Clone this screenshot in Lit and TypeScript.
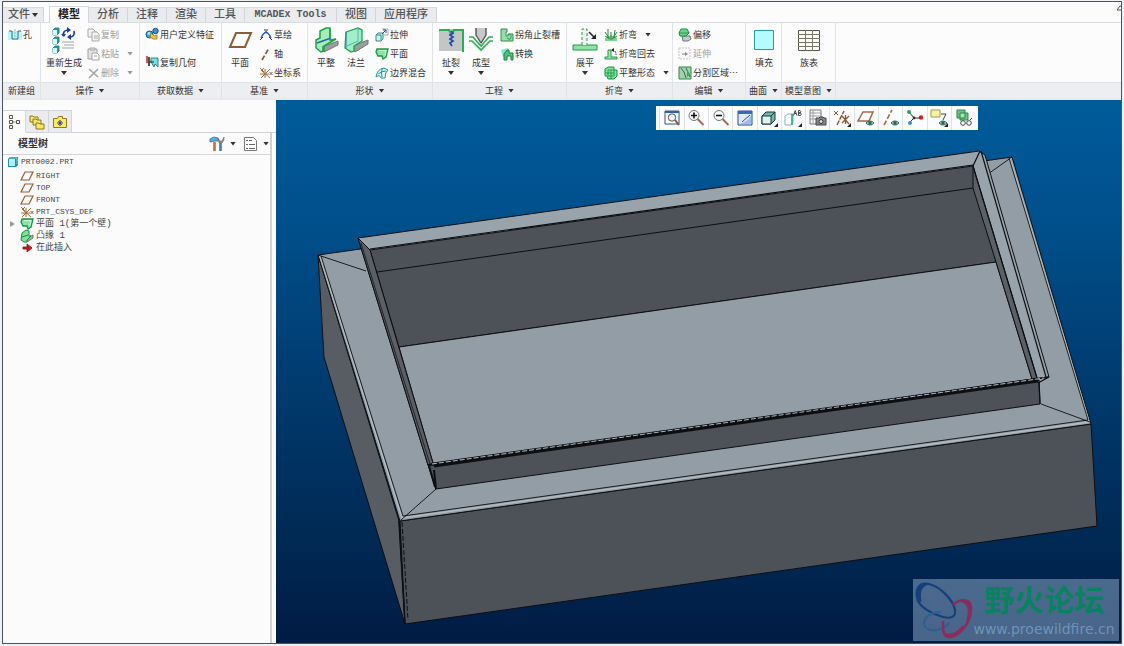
import { LitElement, html, css, svg, nothing, TemplateResult } from "lit";
import { customElement, property } from "lit/decorators.js";

const BR = "#8a5a34";

const csys = svg`<path d="M1 2l4 4M5 2 2 5M6 12V3M2 12l9-9M3 5l8 7M1 8h9" stroke="#a06a3c" fill="none"/><path d="M10.500 6l3 3m0-3-3 3" stroke="#555" fill="none" stroke-width=".9"/>`;
const sheet = svg`<path d="M2 2h11l-2 8-3 2-1-3H3L1 5Z" fill="#8ee2a2" stroke="#159447" stroke-width="1.300"/><path d="M4 3.500h7l-1 5" fill="none" stroke="#d5f7dc"/>`;
const eye = svg`<path d="M9 14q4-4 8 0-4 4-8 0Z" fill="#d8efe8" stroke="#2c5c50"/><circle cx="13" cy="14" r="1.800" fill="#1e6b55"/>`;
const corner = svg`<path d="M18 14v4h-4z" fill="#222"/>`;

const ICONS: Record<string, [number, number, TemplateResult<2>]> = {
  hole: [14, 14, svg`<path d="M0 3h14v9H0z" fill="#b9f5f8"/><path d="M1 3h3v8h6V3h3" fill="none" stroke="#2f6f78"/><path d="M7 1v11" stroke="#8fb9bd" stroke-dasharray="2 1"/>`],
  regen: [26, 28, svg`${[2, 11, 20].map((y) => svg`<path d="M2 ${y + 2}l2-2h4v5l-2 2H2z" fill="#2c9a9a" stroke="#24777a" stroke-width=".8"/><path d="M2 ${y + 2}h4v5H2z" fill="#d3faf8"/>`)}
    <path d="M11 16h12M13 19h10M11 22h12" stroke="#9da3a6"/><path d="M12.500 10q-1-5 4-6M23 5q1 5-3 6" fill="none" stroke="#1d3fae" stroke-width="1.700"/><path d="M16 1l4 3-4 3zM20 8l-4 3 4 3zM10 8h5l-2 3z" fill="#1d3fae"/>`],
  copy: [14, 14, svg`<g fill="#f3f3f3" stroke="#aaa"><path d="M2 1h5l2 2v6H2z"/><path d="M6 4h5l2 2v7H6z"/><path d="M8 8h4M8 10h4"/></g>`],
  paste: [14, 14, svg`<g fill="#e3e3e3" stroke="#a5a5a5"><path d="M2 2h9v10H2z"/><path d="M4 1h5v2H4z"/><path d="M6 6h5l2 2v5H6z" fill="#fafafa"/><path d="M8 9h3"/></g>`],
  del: [14, 14, svg`<path d="M3 3l9 8M12 3l-9 9" stroke="#a3a3a3" stroke-width="1.500"/>`],
  udf: [14, 14, svg`<circle cx="4.500" cy="7.500" r="3.500" fill="#36a8d2" stroke="#175c82"/><circle cx="10.500" cy="4" r="2.700" fill="#3f93d8" stroke="#174780"/><path d="M6 6l3 3 3-1v4H8L5 10z" fill="#efc84a" stroke="#8a7023" stroke-width=".8"/><circle cx="4" cy="6.500" r="1.400" fill="#aee8f5"/>`],
  geom: [14, 14, svg`<path d="M2 1v7" stroke="#c03028" stroke-width="1.600"/><path d="M4 2v9" stroke="#222" stroke-width="1.600"/><path d="M6 3h7v9l-3-3-1 3-3-5z" fill="#74e3df" stroke="#1c777a" stroke-width=".9"/><path d="M4 7h5" stroke="#222"/>`],
  plane: [26, 24, svg`<path d="M9 5h15l-6 14H3z" fill="#fff" stroke="#8f5c36" stroke-width="2"/>`],
  sketch: [14, 14, svg`<path d="M2 10q5-11 10 0" fill="none" stroke="#2456b8" stroke-width="1.300"/><path d="M1 12l3-3M10 9l3 3M5 2h4" stroke="#333"/><circle cx="7" cy="4" r="1" fill="#2456b8"/>`],
  axis: [14, 14, svg`<path d="M3 13L10 1" stroke=${BR} stroke-width="1.700" stroke-dasharray="5 2"/>`],
  csys: [14, 14, csys],
  flat: [26, 28, svg`<path d="M9 21l16-6v4l-14 7z" fill="#9a9d9e" stroke="#777"/><path d="M3 14l4-2V5l6-3h4v12l6-1-12 7v5l-3 1-5-4z" fill="#a5edb4" stroke="#1ca14c" stroke-width="1.500"/><path d="M4 17l14-5" stroke="#2764b5" stroke-width="1.500"/><path d="M17 3v10M10 26v-6" stroke="#1ca14c" stroke-width="1.500"/>`],
  flange: [26, 28, svg`<path d="M10 20l15-6v4l-13 8z" fill="#9a9d9e" stroke="#777"/><path d="M3 6l12-4 4 2v11l-8 5v5l-3 1-6-4z" fill="#a1efc6" stroke="#1ca14c" stroke-width="1.300"/><path d="M15 2v13M4 20l11-5" fill="none" stroke="#4eb0bd"/><path d="M3 6v16" stroke="#2d7eb5"/>`],
  extrude: [14, 14, svg`<path d="M1 7l2-2h5v6l-2 2H1z" fill="#c4f6f4" stroke="#3d8588"/><path d="M1 7h5v5" fill="none" stroke="#3d8588"/><path d="M7 1h6v6H8" fill="none" stroke="#aaa"/><path d="M7 6l4-4M8 2h3v3" fill="none" stroke="#214fa8"/>`],
  sheet: [14, 14, sheet],
  blend: [14, 14, svg`<path d="M1 11Q2 3 9 2l4 2q-3 2-3 8H6Q5 8 1 11z" fill="#dff8f8" stroke="#2491a6"/><path d="M3 8q4-3 8-3M7 3q-1 4 0 8" fill="none" stroke="#2491a6"/>`],
  rip: [26, 26, svg`<path d="M1 2h24v22H1z" fill="#c4c6c6"/><path d="M1 3h10l2 4M25 25V3H16l-2 4" fill="none" stroke="#27b052" stroke-width="2"/><path d="M13 4l2 2-3 2 3 2-3 2 3 2-3 2 2 3" fill="none" stroke="#2148ad" stroke-width="1.700"/>`],
  form: [26, 26, svg`<path d="M8 1h10v7l-5 9-5-9z" fill="#c7c9c9"/><path d="M8 1v7l5 8M18 1v7l-5 8" fill="none" stroke="#555" stroke-width="1.400"/><path d="M1 10h4l8 9 8-9h4M1 14h3l9 9 9-9h3" fill="none" stroke="#27b052" stroke-width="1.600"/>`],
  relief: [14, 14, svg`<path d="M1 1h6v3H6v4h2V6h5v7H1z" fill="#9fdaae" stroke="#279449"/><path d="M8 7q3-2 3 2t-4 1" fill="none" stroke="#279449"/>`],
  convert: [14, 14, svg`<path d="M1 3l7-2v7l-5 2z" fill="#7ce6e4"/><path d="M4 12V7l3-4h2v3h4v7h-2V9H7v4H4z" fill="#4cc477" stroke="#17853d"/>`],
  unbend: [26, 26, svg`<path d="M1 18h24v5H1z" fill="#8fe3a4" stroke="#27984a"/><path d="M10 18V2h5v16" fill="#eef3ef" stroke="#27984a" stroke-dasharray="3 2"/><path d="M17 5l6 6" stroke="#222" stroke-width="1.500"/><path d="M24 12h-5l5-5z" fill="#222"/>`],
  bend: [14, 14, svg`<path d="M1 10l6-3 6 3v3H1z" fill="#7fd493"/><path d="M7 12V4M5 10L1 4M9 10l4-6M4 9L4 1M10 9l1-7M1 8l5 3M13 8l-5 3" stroke="#2b8042" fill="none"/>`],
  back: [14, 14, svg`<path d="M1 12v-2h3V3h3v7h6v2z" fill="#9ce5ad" stroke="#299849"/><path d="M8 3q4 0 4 5" fill="none" stroke="#222" stroke-dasharray="2 1"/><path d="M7 3l3-2v4z" fill="#222"/>`],
  pattern: [14, 14, svg`<path d="M1 3l3-2h6v3h3v6l-3 3H4l-1-3H1z" fill="#7fdf97" stroke="#159447"/><path d="M4 4h6v6H4zM1 7h9M7 4v9" fill="none" stroke="#159447" stroke-width=".8"/>`],
  offset: [14, 14, svg`<path d="M4 8h8l1 3-3 2H5z" fill="#bcc" stroke="#777"/><path d="M3 1h6l2 4-3 3H2L1 5z" fill="#65d985" stroke="#168e40"/><path d="M1 5h10" fill="none" stroke="#168e40" stroke-width=".8"/>`],
  extend: [14, 14, svg`<path d="M1 1h11v11H1z" fill="#f7f7f7" stroke="#c5c5c5" stroke-dasharray="2 1"/><path d="M4 7h4" stroke="#888"/><path d="M7 5l3 2-3 2z" fill="#888"/>`],
  split: [14, 14, svg`<path d="M1 1h12v12H1z" fill="#a9cdb2" stroke="#2c8a49"/><path d="M3 2l3 4 2 6M8 2l4 9" fill="none" stroke="#277343"/><path d="M9 4v7l3-3z" fill="#2eae57"/>`],
  fill: [26, 26, svg`<path d="M3.500 3.500h19v19h-19z" fill="#b4fcfb" stroke="#2e989b"/>`],
  family: [26, 26, svg`<path d="M2.500 3.500h21v20h-21z" fill="#fdfdf8" stroke="#55554c"/><path d="M2 7.500h22M2 11.500h22M2 15.500h22M2 19.500h22M9.500 3v21M16.500 3v21" stroke="#77776a" fill="none"/>`],
  part: [12, 12, svg`<path d="M1 3l2-2h8v8l-2 2H1z" fill="#2b8f96"/><path d="M2 3h6v7H2z" fill="#a9f6f8"/><path d="M3 2h7v6" fill="none" stroke="#71d4d8"/>`],
  datum: [14, 12, svg`<path d="M5 2h8l-4 8H1z" fill="#fffdfa" stroke="#9b5c35" stroke-width="1.200"/>`],
  lip: [14, 14, svg`<path d="M6 9l7-3v3l-6 4z" fill="#aaa" stroke="#777"/><path d="M2 4l4-3 3 1v5l2 0-4 4v2H4L1 11z" fill="#7fe19a" stroke="#159447"/><path d="M2 8l6-2" stroke="#159447"/>`],
  insert: [12, 12, svg`<path d="M2 5h4V2l5 4-5 4V7H2z" fill="#d8131b" stroke="#711" stroke-width=".8"/>`],
  tree: [14, 18, svg`<g fill="#fff" stroke="#555"><path d="M2.500 2.500h3v3h-3zM2.500 7.500h3v3h-3zM2.500 12.500h3v3h-3zM9.500 7.500h3v3h-3z"/><path d="M5.500 9h4" stroke-dasharray="2 1"/></g>`],
  folders: [16, 16, svg`<g fill="#f7e56a" stroke="#8a7824"><path d="M1 2h3l1 1h4v5H1z"/><path d="M4 5h3l1 1h4v5H4z"/><path d="M7 9h3l1 1h4v5H7z"/></g>`],
  fav: [16, 16, svg`<path d="M1.500 4.500h4l1-2h4v2h4v9h-13z" fill="#f9ec62" stroke="#8a7824"/><path d="M8 6v6M5 9h6" stroke="#3038a0" stroke-width="1.200"/><path d="M6 7l4 4M10 7l-4 4" stroke="#3038a0" stroke-width=".7"/>`],
  tools: [16, 16, svg`<path d="M1 3l4-2 4 1v3H6L1 6z" fill="#58b3dc" stroke="#36738f" stroke-width=".8"/><path d="M5.500 6v9" stroke="#cd6c34" stroke-width="2.600"/><path d="M11.500 6v9" stroke="#3d7bb8" stroke-width="2.600"/><path d="M9 2l2 3h2l2-4v3l-2 3h-3z" fill="#8e9499" stroke="#666" stroke-width=".6"/>`],
  list: [16, 16, svg`<path d="M2.500 1.500h9l3 3v10h-12z" fill="#fff" stroke="#777"/><path d="M4 4.500h2M4 8.500h2M4 12.500h2M7 4.500h3M7 8.500h6M7 12.500h6" stroke="#666" fill="none"/>`],
  refit: [18, 18, svg`<path d="M2 2h14v13H2z" fill="#fff" stroke="#2c4c9c"/><path d="M2 2h14v2H2z" fill="#2c5fbd"/><circle cx="9" cy="8.500" r="3.700" fill="#edf4fc" stroke="#555"/><path d="M12 11l4 5" stroke="#8b5a3c" stroke-width="2"/>`],
  zoomin: [18, 18, svg`<circle cx="7" cy="6.500" r="5" fill="#f7f9fb" stroke="#777"/><path d="M4 6.500h6M7 3.500v6" stroke="#111" stroke-width="1.600"/><path d="M10.500 10l6 6" stroke="#a06c4e" stroke-width="2"/>`],
  zoomout: [18, 18, svg`<circle cx="7" cy="6.500" r="5" fill="#f7f9fb" stroke="#777"/><path d="M4 6.500h6" stroke="#111" stroke-width="1.600"/><path d="M10.500 10l6 6" stroke="#a06c4e" stroke-width="2"/>`],
  repaint: [18, 18, svg`<path d="M2 2h14v14H2z" fill="#dfeafa" stroke="#25489c"/><path d="M2 2h14v3H2z" fill="#3468c4"/><path d="M3 15Q12 13 15 6v9z" fill="#9fbde8"/><path d="M6 13l8-7" stroke="#25489c"/>`],
  shade: [18, 18, svg`<path d="M2 7l4-4h9v8l-4 4H2z" fill="#73b6ab" stroke="#173c38"/><path d="M2 7h9v8H2z" fill="#dff3f0" stroke="#173c38"/><path d="M11 7l4-4" stroke="#173c38"/>${corner}`],
  views: [18, 18, svg`<path d="M1 7l3-2h5v8l-2 3H1z" fill="#fff" stroke="#8ab7ad"/><path d="M8 5v11" stroke="#26a68c" stroke-width="1.600"/><path d="M9.500 6.500l1.700-5 1.700 5M10.300 4.500h2M14.500 1.500v5h2q1.500-1.500 0-2.500h-2 1.500q1.500-1.500 0-2.500z" fill="none" stroke="#333" stroke-width=".9"/>${corner}`],
  manager: [18, 18, svg`<path d="M1 1h11v14H1z" fill="#fff" stroke="#777"/><path d="M1 4h11M1 7h11M1 10h11M4 1v14" stroke="#999" fill="none"/><path d="M7 9h3l1-1h3l1 1h2v7H7z" fill="#888" stroke="#444"/><circle cx="12" cy="12.500" r="2" fill="#ddd" stroke="#333"/>`],
  datums: [18, 18, svg`<path d="M4 16L11 2" stroke="#8c5936" stroke-width="1.500" stroke-dasharray="5 1"/><path d="M9 14l7-7M9 7l7 8M12.500 6v9" stroke="#8c5936" stroke-width="1.300" fill="none"/><path d="M1 2l4 4M5 2L1 6" stroke="#8c5936"/>${corner}`],
  showplane: [18, 18, svg`<path d="M6 3h10l-4 9H1z" fill="#fff" stroke="#a56a43" stroke-width="1.500"/>${eye}`],
  showaxis: [18, 18, svg`<path d="M2 16L10 1" stroke="#a56a43" stroke-width="1.600" stroke-dasharray="5 2"/>${eye}`],
  spin: [18, 18, svg`<path d="M3 3l5 6h7M8 9l-5 5" fill="none" stroke="#333"/><circle cx="3" cy="3" r="2" fill="#26a45c"/><circle cx="15" cy="8.500" r="2.300" fill="#c52a31"/><circle cx="4" cy="14" r="2" fill="#2f91c8"/><circle cx="8" cy="9" r="1.400" fill="#235"/>`],
  notes: [18, 18, svg`<path d="M1 1h9v7H1z" fill="#faf4a0" stroke="#a29a50"/><path d="M11 5h5l-3 6" fill="none" stroke="#444"/>${eye}${corner}`],
  glasses: [18, 18, svg`<path d="M2 1h8v3h3v7H5V9H2z" fill="#6cc486" stroke="#2d8547"/><path d="M5 4h5v5H5z" fill="#a6e3b5" stroke="#2d8547"/><g fill="#fff" stroke="#444"><circle cx="8" cy="14" r="2.300"/><circle cx="14" cy="14" r="2.300"/></g><path d="M15 11l2-2" stroke="#444"/>`],
  collapse: [5, 8, svg`<path d="M1 6l3-4 1 0M1 6h4" stroke="#555"/>`],
};

function icon(name: string) {
  const [w, h, body] = ICONS[name];
  return html`<svg width=${w} height=${h} viewBox="0 0 ${w} ${h}" aria-hidden="true" fill="none">${body}</svg>`;
}

interface Cmd { icon: string; text: string; caret?: boolean; off?: boolean }
interface Group { name: string; cls: string; big?: Cmd[]; small?: Cmd[]; loose?: boolean; plain?: boolean }

const GROUPS: Group[] = [
  { name: "新建组", cls: "g-new", plain: true, small: [{ icon: "hole", text: "孔" }] },
  { name: "操作", cls: "g-ops", big: [{ icon: "regen", text: "重新生成", caret: true }],
    small: [{ icon: "copy", text: "复制", off: true }, { icon: "paste", text: "粘贴", off: true, caret: true }, { icon: "del", text: "删除", off: true, caret: true }] },
  { name: "获取数据", cls: "g-data", loose: true, small: [{ icon: "udf", text: "用户定义特征" }, { icon: "geom", text: "复制几何" }] },
  { name: "基准", cls: "g-datum", big: [{ icon: "plane", text: "平面" }],
    small: [{ icon: "sketch", text: "草绘" }, { icon: "axis", text: "轴" }, { icon: "csys", text: "坐标系" }] },
  { name: "形状", cls: "g-shape", big: [{ icon: "flat", text: "平整" }, { icon: "flange", text: "法兰" }],
    small: [{ icon: "extrude", text: "拉伸" }, { icon: "sheet", text: "平面" }, { icon: "blend", text: "边界混合" }] },
  { name: "工程", cls: "g-eng", big: [{ icon: "rip", text: "扯裂", caret: true }, { icon: "form", text: "成型", caret: true }],
    small: [{ icon: "relief", text: "拐角止裂槽" }, { icon: "convert", text: "转换" }] },
  { name: "折弯", cls: "g-bend", big: [{ icon: "unbend", text: "展平", caret: true }],
    small: [{ icon: "bend", text: "折弯", caret: true }, { icon: "back", text: "折弯回去" }, { icon: "pattern", text: "平整形态", caret: true }] },
  { name: "编辑", cls: "g-edit", small: [{ icon: "offset", text: "偏移" }, { icon: "extend", text: "延伸", off: true }, { icon: "split", text: "分割区域⋯" }] },
  { name: "曲面", cls: "g-surf", big: [{ icon: "fill", text: "填充" }] },
  { name: "模型意图", cls: "g-intent", big: [{ icon: "family", text: "族表" }] },
];

const shared = css`
  :host, *, *::before, *::after { box-sizing: border-box; }
  :host { font-family: "Liberation Sans", "Noto Sans CJK SC", sans-serif; color: #333; }
  button { font: inherit; color: inherit; border: 0; background: none; padding: 0; margin: 0; cursor: pointer; white-space: nowrap; }
  svg { display: block; flex: none; }
  .caret { flex: none; width: 6px; height: 4px; background: #333; clip-path: polygon(0 0, 100% 0, 50% 100%); }
`;

@customElement("ribbon-group")
class RibbonGroup extends LitElement {
  @property({ attribute: false }) group!: Group;
  static styles = [shared, css`
    :host { display: flex; flex-direction: column; border-right: 1px solid #e1e4e7; font-size: 9px; }
    .body { display: flex; gap: 4px; flex: 1; padding: 2px 0 0 var(--inset, 3px); }
    .bigs { display: flex; }
    .big { display: flex; flex-direction: column; align-items: center; min-width: 30px; height: 54px; }
    .pic { display: flex; align-items: center; height: 30px; }
    .big .text { line-height: 16px; }
    .col { display: flex; flex-direction: column; }
    .small { display: flex; align-items: center; gap: 1px; height: 19px; }
    .loose .small { height: 28px; }
    .loose { margin-top: -5px; }
    .small .caret { margin-left: 7px; }
    .off { color: #a0a0a0; }
    .off .caret { background: #999; }
    .name { display: flex; align-items: center; justify-content: center; gap: 5px; height: 18px; background: #eceef1; border-top: 1px solid #dfe2e5; border-bottom: 2px solid #e8eaed; }
  `];
  small(c: Cmd) {
    return html`<button class="small ${c.off ? "off" : ""}" ?disabled=${c.off}>${icon(c.icon)}<span>${c.text}</span>${c.caret ? html`<span class="caret"></span>` : nothing}</button>`;
  }
  render() {
    const g = this.group;
    return html`<div class="body">
        ${g.big ? html`<div class="bigs">${g.big.map((c) => html`<button class="big"><span class="pic">${icon(c.icon)}</span><span class="text">${c.text}</span>${c.caret ? html`<span class="caret"></span>` : nothing}</button>`)}</div>` : nothing}
        ${g.small ? html`<div class="col ${g.loose ? "loose" : ""}">${g.small.map((c) => this.small(c))}</div>` : nothing}
      </div>
      <button class="name">${g.name}${g.plain ? nothing : html`<span class="caret"></span>`}</button>`;
  }
}

@customElement("model-tree")
class ModelTree extends LitElement {
  static styles = [shared, css`
    :host { display: flex; flex-direction: column; background: #fbfbfc; padding-top: 10px; }
    .tabs { display: flex; height: 23px; }
    .tab { display: flex; align-items: center; justify-content: center; width: 23px; background: #e9ebee; border: 1px solid #d3d6d9; border-left: 0; }
    .tab.on { background: #fbfbfc; border-bottom-color: #fbfbfc; }
    .rest { flex: 1; border-bottom: 1px solid #cfd2d5; }
    .pane { flex: 1; margin-right: 4px; border-right: 2px solid #d0d2d4; }
    .head { display: flex; align-items: center; height: 22px; padding: 0 1px 0 15px; border-bottom: 1px solid #d3d6d9; }
    .title { flex: 1; margin: 0; font-size: 10px; line-height: 20px; font-weight: 700; }
    .opt { display: flex; align-items: center; gap: 5px; margin-left: 6px; }
    ul { list-style: none; margin: 0; padding: 1px 0 0 4px; font-family: "Liberation Mono", "Noto Sans CJK SC", monospace; font-size: 8px; line-height: 12px; color: #444; }
    li { display: flex; align-items: center; gap: 2px; height: 12px; white-space: pre; }
    .kids { padding: 2px 0 0 7px; }
    .twist { width: 8px; display: flex; }
    .twist.on::before { content: ""; width: 5px; height: 6px; background: #999; clip-path: polygon(0 0, 100% 50%, 0 100%); }
    .cjk { font-size: 9px; }
    .slot { width: 14px; display: flex; justify-content: center; }
  `];
  render() {
    const rows: [string, string, boolean?][] = [
      ["datum", "RIGHT"], ["datum", "TOP"], ["datum", "FRONT"], ["csys", "PRT_CSYS_DEF"],
      ["sheet", "平面 1(第一个壁)", true], ["lip", "凸缘 1"], ["insert", "在此插入"],
    ];
    return html`<div class="tabs">
        <button class="tab on" aria-label="模型树">${icon("tree")}</button>
        <button class="tab" aria-label="文件夹浏览器">${icon("folders")}</button>
        <button class="tab" aria-label="收藏夹">${icon("fav")}</button>
        <div class="rest"></div>
      </div>
      <div class="pane">
        <div class="head"><h2 class="title">模型树</h2>
          <button class="opt" aria-label="设置">${icon("tools")}<span class="caret"></span></button>
          <button class="opt" aria-label="显示">${icon("list")}<span class="caret"></span></button>
        </div>
        <ul><li>${icon("part")}<span>PRT0002.PRT</span></li></ul>
        <ul class="kids">${rows.map(([ic, text, open]) => html`<li><span class="twist ${open ? "on" : ""}"></span><span class="slot">${icon(ic)}</span><span class=${/[^\x00-\x7f]/.test(text) ? "cjk" : ""}>${text}</span></li>`)}</ul>
      </div>`;
  }
}

@customElement("model-view")
class ModelView extends LitElement {
  static styles = [shared, css`
    :host { display: block; position: relative; overflow: hidden; background: linear-gradient(#005c9a, #00508c 22%, #00396c 55%, #002852 83%, #001b44); }
    .scene { width: 100%; height: 100%; }
    .bar { position: absolute; top: 6px; left: 45%; display: flex; width: 322px; height: 24px; padding: 0 3px; background: #fbfcfd; }
    .bar button { flex: 1; display: flex; align-items: center; justify-content: center; border-left: 1px solid #dfe3e7; }
    .mark { position: absolute; right: 2px; bottom: 2px; width: 206px; height: 62px; background: rgba(160, 190, 218, 0.46); display: flex; align-items: center; }
    .mark .words { flex: 1; display: flex; flex-direction: column; align-items: center; margin-left: -4px; }
    .cn { font-size: 30px; line-height: 38px; font-weight: 700; color: #08825f; }
    .url { font-size: 14px; line-height: 18px; color: #6d94b8; font-family: "DejaVu Sans", sans-serif; }
  `];
  render() {
    const tools: [string, string][] = [["refit", "重新调整"], ["zoomin", "放大"], ["zoomout", "缩小"], ["repaint", "重画"], ["shade", "显示样式"], ["views", "已命名视图"], ["manager", "视图管理器"], ["datums", "基准显示"], ["showplane", "平面显示"], ["showaxis", "轴显示"], ["spin", "旋转中心"], ["notes", "注释显示"], ["glasses", "外观"]];
    return html`
      <svg class="scene" viewBox="276 100 845 543" role="img" aria-label="PRT0002" stroke-linejoin="round">
        <g stroke="#0c0f12" stroke-width="1">
          <path d="M318 255L399 521 405 624 324 357Z" fill="#585c63"/>
          <path d="M400 521L1091 424 1097 526 405 624Z" fill="#4d5158"/>
          <path d="M318 255L1012 157 1091 424 400 521Z" fill="#929da5"/>
          <path d="M320 256L402 518 1089 422 1010 158" fill="none" stroke="#b3bcc3" stroke-width="1.500"/>
          <path d="M321 256L403 516 1088 420M1009 158L1088 420M318 255L366 271M1012 157L988 174M436 489L401 520M1041 404L1090 422" fill="none" stroke-width=".9"/>
          <path d="M402 522L408 620" fill="none" stroke-dasharray="5 2"/><path d="M399 521L405 624" stroke-width="1.500"/>
          <path d="M428 465L436 489 1040 404 1039 380Z" fill="#4d5158"/>
          <path d="M434 470L436 489M429 466L435 487" stroke-width="2"/>
          <path d="M358 238L979 151 985 155 1049 377 428 465Z" fill="#98a3ab"/>
          <path d="M370 250L973 166 996 262 399 347Z" fill="#4d5158"/>
          <path d="M377 272L973 188" fill="none"/>
          <path d="M399 347L996 262 1032 379 433 463Z" fill="#929da5"/>
          <path d="M358 238L370 250 433 463 428 465Z" fill="#5b5f66"/>
          <path d="M361 243L430 464" fill="none" stroke-width=".7"/>
          <path d="M973 166L1037 378 1032 379 996 262 973 188Z" fill="#5b5f66"/>
          <path d="M973 166L1037 378M981 151L1046 377M973 166L980 151M370 249L973 165" fill="none" stroke-width="1.200"/>
          <path d="M434 466L1038 381" fill="none" stroke-width="3"/>
          <path d="M428 465L1049 377M428 465L436 465M1038 383L1049 377M1039 382L1040 404" fill="none" stroke-width="1.300"/>
          <path d="M432 464L1044 378" fill="none" stroke="#bcc3c8" stroke-width=".9" stroke-dasharray="5 2"/>
        </g>
      </svg>
      <div class="bar" role="toolbar">${tools.map(([n, label]) => html`<button aria-label=${label}>${icon(n)}</button>`)}</div>
      <div class="mark">
        <svg width="60" height="62" viewBox="0 0 60 62" fill="none">
          <path d="M5 22C1 10 6 3 16 5 28 8 40 21 42 31 43 38 38 40 30 38 18 35 8 28 5 22Z" stroke="#173f7c" stroke-width="2.200"/>
          <path d="M6 24C0 10 6 2 17 5 9 6 6 12 8 22Z" fill="#173f7c" stroke="#173f7c"/>
          <path d="M28 33C12 33 8 45 13 49 20 54 31 50 36 44" stroke="#2d5f92" stroke-width="2"/>
          <path d="M40 26C46 20 58 18 58 30 58 44 46 58 36 58 29 58 30 48 30 42" stroke="#8c2b5c" stroke-width="2.500"/>
          <path d="M47 22C59 19 59 32 54 42 57 30 56 24 47 22ZM50 47C45 55 37 59 32 55 39 57 45 53 50 47Z" fill="#8c2b5c" stroke="#8c2b5c" stroke-width="1.500"/>
        </svg>
        <div class="words"><span class="cn">野火论坛</span><span class="url">www.proewildfire.cn</span></div>
      </div>`;
  }
}

@customElement("app-root")
class AppRoot extends LitElement {
  static styles = [shared, css`
    :host { display: block; height: 100vh; padding: 1px 2px 2px; background: #eef1f5; }
    .frame { display: flex; flex-direction: column; height: 100%; border: 1px solid #4b535e; background: #fcfcfd; }
    .tabs { display: flex; align-items: flex-end; height: 21px; border-bottom: 1px solid #d9dcdf; }
    .tab { height: 15px; padding: 0 8px; border-right: 1px solid #d3d6d9; border-top: 1px solid #d9dcdf; background: #e9ebee; color: #555; font-family: "Liberation Mono", "Noto Sans CJK SC", monospace; font-size: 11px; line-height: 14px; font-weight: 500; }
    .file { display: flex; align-items: center; gap: 2px; padding: 0 5px; margin-right: 6px; }
    .tab.on { height: 17px; line-height: 17px; margin-bottom: -1px; background: #fcfcfd; border-left: 1px solid #d3d6d9; margin-left: -1px; color: #222; font-weight: 700; }
    .latin { min-width: 92px; font-size: 10px; font-weight: 700; }
    .fold { margin-left: auto; align-self: flex-start; padding-top: 2px; }
    .ribbon { display: flex; height: 77px; }
    .g-new { width: 38px; --inset: 5px; }
    .g-ops { width: 99px; --inset: 5px; }
    .g-data { width: 82px; --inset: 5px; }
    .g-datum { width: 86px; }
    .g-shape { width: 125px; }
    .g-eng { width: 134px; }
    .g-bend { width: 106px; }
    .g-edit { width: 73px; --inset: 5px; }
    .g-surf { width: 36px; }
    .g-intent { width: 54px; --inset: 12px; }
    .tail { flex: 1; display: flex; align-items: flex-end; }
    .tail::after { content: ""; flex: 1; height: 18px; background: #eceef1; border-top: 1px solid #dfe2e5; border-bottom: 2px solid #e8eaed; }
    .main { display: flex; flex: 1; min-height: 0; }
    model-tree { width: 273px; flex: none; }
    model-view { flex: 1; }
  `];
  render() {
    return html`<div class="frame">
      <nav class="tabs">
        <button class="tab file">文件<span class="caret"></span></button>
        ${["模型", "分析", "注释", "渲染", "工具", "MCADEx Tools", "视图", "应用程序"].map((t, i) => html`<button class="tab ${i === 0 ? "on" : ""} ${i === 5 ? "latin" : ""}">${t}</button>`)}
        <button class="fold" aria-label="最小化功能区">${icon("collapse")}</button>
      </nav>
      <div class="ribbon">${GROUPS.map((g) => html`<ribbon-group class=${g.cls} .group=${g}></ribbon-group>`)}<div class="tail"></div></div>
      <div class="main"><model-tree></model-tree><model-view></model-view></div>
    </div>`;
  }
}
